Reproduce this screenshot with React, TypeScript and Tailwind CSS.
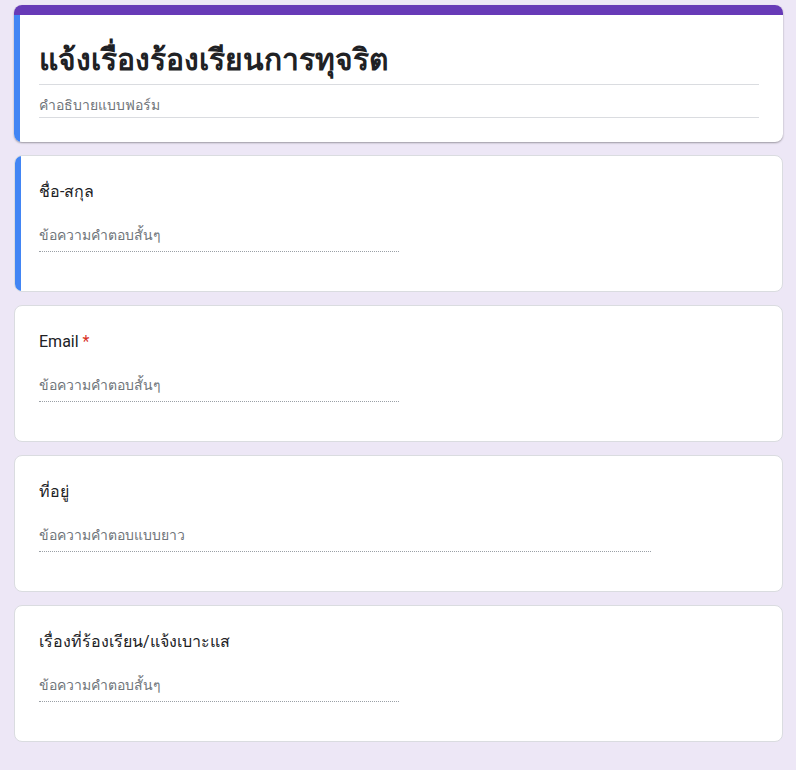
import React from 'react';

interface Question {
  title: string;
  placeholder: string;
  long?: boolean;
  required?: boolean;
  active?: boolean;
}

const questions: Question[] = [
  { title: 'ชื่อ-สกุล', placeholder: 'ข้อความคำตอบสั้นๆ', active: true },
  { title: 'Email', placeholder: 'ข้อความคำตอบสั้นๆ', required: true },
  { title: 'ที่อยู่', placeholder: 'ข้อความคำตอบแบบยาว', long: true },
  { title: 'เรื่องที่ร้องเรียน/แจ้งเบาะแส', placeholder: 'ข้อความคำตอบสั้นๆ' },
];

const QuestionCard: React.FC<{ q: Question }> = ({ q }) => (
  <div className="relative h-[137px] rounded-lg border border-[#dadce0] bg-white overflow-hidden">
    {q.active && <div className="absolute left-0 top-0 bottom-0 w-[6px] bg-[#4285f4]" />}
    <div className="pl-6 pr-6 pt-6">
      <div className="flex items-start text-[16px] leading-6 text-[#202124]">
        <span>{q.title}</span>
        {q.required && <span className="ml-1 text-[#d93025]">*</span>}
      </div>
      <div
        className={`mt-[21px] border-b border-dotted border-[#9aa0a6] pb-[6px] text-[14px] leading-5 text-[#70757a] ${
          q.long ? 'w-[612px]' : 'w-[360px]'
        }`}
      >
        {q.placeholder}
      </div>
    </div>
  </div>
);

export default function App() {
  return (
    <div
      className="min-h-[770px] w-full bg-[#ede7f6] px-[14px] pt-[5px] pb-8"
      style={{ fontFamily: 'Roboto, "Liberation Sans", Arial, sans-serif' }}
    >
      <div className="w-[769px] flex flex-col gap-[13px]">
        <div className="relative h-[137px] rounded-lg bg-white overflow-hidden shadow-[0_1px_2px_rgba(0,0,0,0.35)]">
          <div className="h-[10px] bg-[#673ab7]" />
          <div className="absolute left-0 top-[10px] bottom-0 w-[6px] bg-[#4285f4]" />
          <div className="pl-[25px] pr-6 pt-[25px]">
            <div className="border-b border-[#dadce0] pb-1 text-[30px] font-bold leading-10 text-[#202124]">
              แจ้งเรื่องร้องเรียนการทุจริต
            </div>
            <div className="mt-[10px] border-b border-[#dadce0] pb-[2px] text-[14px] leading-5 text-[#70757a]">
              คำอธิบายแบบฟอร์ม
            </div>
          </div>
        </div>
        {questions.map((q) => (
          <QuestionCard key={q.title} q={q} />
        ))}
      </div>
    </div>
  );
}
